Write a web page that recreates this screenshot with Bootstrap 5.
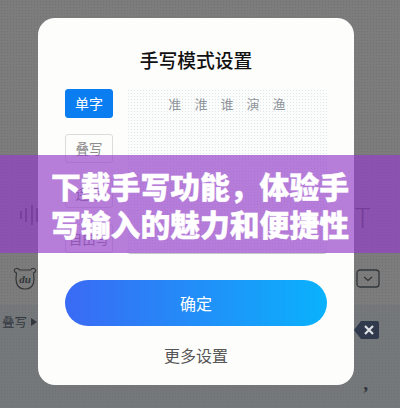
<!DOCTYPE html>
<html lang="zh">
<head>
<meta charset="utf-8">
<title>手写模式设置</title>
<link href="https://cdn.jsdelivr.net/npm/bootstrap@5.3.0/dist/css/bootstrap.min.css" rel="stylesheet">
<style>
html,body{margin:0;width:400px;height:408px;overflow:hidden}
body{font-family:"Noto Sans CJK SC","Liberation Sans",sans-serif;background:#7b7b7b}
.stage{position:relative;width:400px;height:408px;overflow:hidden}
.kb-top{height:305px;background-color:#7c7c7c;background-image:radial-gradient(circle,#727272 0.8px,transparent 1px);background-size:3px 3px;padding:0 20px 14px 12px}
.kb-bottom{height:103px;background-color:#74787a;background-image:radial-gradient(circle,#6d7174 0.8px,transparent 1px);background-size:3px 3px;padding:8px 21px 0 2px;position:relative}
.kb-wave{height:64px}
.kb-t{font-size:28px;line-height:28px;color:#3a3a3a;font-weight:300;margin-right:10px;font-family:"Open Sans",sans-serif}
.stack-label{font-size:12.5px;line-height:18px;color:#33383f}
.kb-comma{font-family:"Liberation Serif",serif;font-weight:700;font-size:18px;line-height:18px;color:#2f3338;margin:36px 11px 0 0}
.kb-side{height:85px}
.modal-sheet{position:absolute;left:38px;top:18px;width:316px;height:367px;background:#fdfdfc;border-radius:17px;padding:30px 27px 0}
.sheet-title{font-size:18.8px;line-height:24px;font-weight:500;color:#111;text-align:center;margin:0 0 17px}
.mode-col{width:48px;gap:16px;margin-right:14px}
.mode-btn{height:29px;padding:0;font-size:13.5px;line-height:27px;border-radius:3px;border:1px solid #dcdcdc;color:#8c8c8c;background:transparent;text-align:center;white-space:nowrap}
.mode-btn.on{background:#0a7df0;border-color:#0a7df0;color:#fff;font-size:14px}
.pad{width:201px;height:165px;background-color:#fbfcfc;background-image:radial-gradient(circle,#e2e5e8 0.6px,transparent 0.9px);background-size:3px 3px;border-radius:4px;border-bottom:1px solid #c9c9c9;padding-top:5px;gap:13px;color:#8f959b;font-size:13px;line-height:19px}
.confirm-btn{display:block;width:262px;height:46px;margin-top:26px;padding:0;border:0;border-radius:23px;background:linear-gradient(90deg,#3a6af4,#0ab2fc);color:#fff;font-size:16px;line-height:46px}
.more-link{font-size:16px;line-height:24px;color:#555;text-align:center;margin-top:17px}
.promo{position:absolute;left:0;top:155px;width:400px;height:98px;background:rgba(146,61,200,.67);padding-top:11px;color:#fff;font-size:29.8px;line-height:38px;font-weight:900;text-align:center;-webkit-text-stroke:.4px #fff}
.promo div{white-space:nowrap}
</style>
</head>
<body>
<div class="stage">
  <div class="kb-top d-flex flex-column justify-content-end">
    <div class="kb-wave d-flex justify-content-between align-items-start">
      <svg width="28" height="24" viewBox="0 0 28 24" fill="none" stroke="#333" stroke-width="1.4" aria-hidden="true"><path d="M9 8v8M14 5v14M20 2v20M25 5v14"/></svg>
      <span class="kb-t">T</span>
    </div>
    <div class="d-flex justify-content-between align-items-center">
      <svg width="26" height="24" viewBox="0 0 26 24" fill="none" stroke="#33373a" stroke-width="1.2" aria-hidden="true"><path d="M4.500 6C2 5 1.500 2 4 1.500C5.500 1.200 6.800 2 7.500 3H18.500C19.200 2 20.500 1.200 22 1.500C24.500 2 24 5 21.500 6C22.500 12 23 22 13 22C3 22 3.500 12 4.500 6Z"/><text x="13" y="16" text-anchor="middle" font-family="Liberation Serif" font-style="italic" font-weight="700" font-size="11" fill="#33373a" stroke="none">du</text></svg>
      <svg width="24" height="20" viewBox="0 0 24 20" fill="none" stroke="#33373a" stroke-width="1.300" aria-hidden="true"><rect x="1" y="1" width="22" height="17" rx="3"/><path d="M8 8l4 3.500 4-3.500"/></svg>
    </div>
  </div>
  <div class="kb-bottom d-flex justify-content-between">
    <div class="stack-label d-flex align-items-center align-self-start">叠写<svg width="6" height="8" viewBox="0 0 6 8" class="ms-1" aria-hidden="true"><path d="M0 0l6 4-6 4z" fill="#33383f"/></svg></div>
    <div class="kb-side d-flex flex-column align-items-end">
      <svg width="25" height="18" viewBox="0 0 25 18" class="mt-2" aria-hidden="true"><path d="M7 0h16a2 2 0 0 1 2 2v14a2 2 0 0 1-2 2H7L0 9z" fill="#303a4c"/><path d="M11 5l8 8M19 5l-8 8" stroke="#dfe2e6" stroke-width="2.200"/></svg>
      <div class="kb-comma">,</div>
    </div>
  </div>

  <div class="modal-sheet">
    <h1 class="sheet-title">手写模式设置</h1>
    <div class="d-flex">
      <div class="mode-col d-flex flex-column">
        <div class="mode-btn on">单字</div>
        <div class="mode-btn">叠写</div>
        <div class="mode-btn">连写</div>
        <div class="mode-btn">自由写</div>
      </div>
      <div class="pad d-flex justify-content-center align-items-start">
        <span>准</span><span>淮</span><span>谁</span><span>演</span><span>渔</span>
      </div>
    </div>
    <button type="button" class="btn confirm-btn">确定</button>
    <div class="more-link">更多设置</div>
  </div>

  <div class="promo">
    <div>下载手写功能，体验手</div>
    <div>写输入的魅力和便捷性</div>
  </div>
</div>
<script src="https://cdn.jsdelivr.net/npm/bootstrap@5.3.0/dist/js/bootstrap.bundle.min.js"></script>
</body>
</html>
